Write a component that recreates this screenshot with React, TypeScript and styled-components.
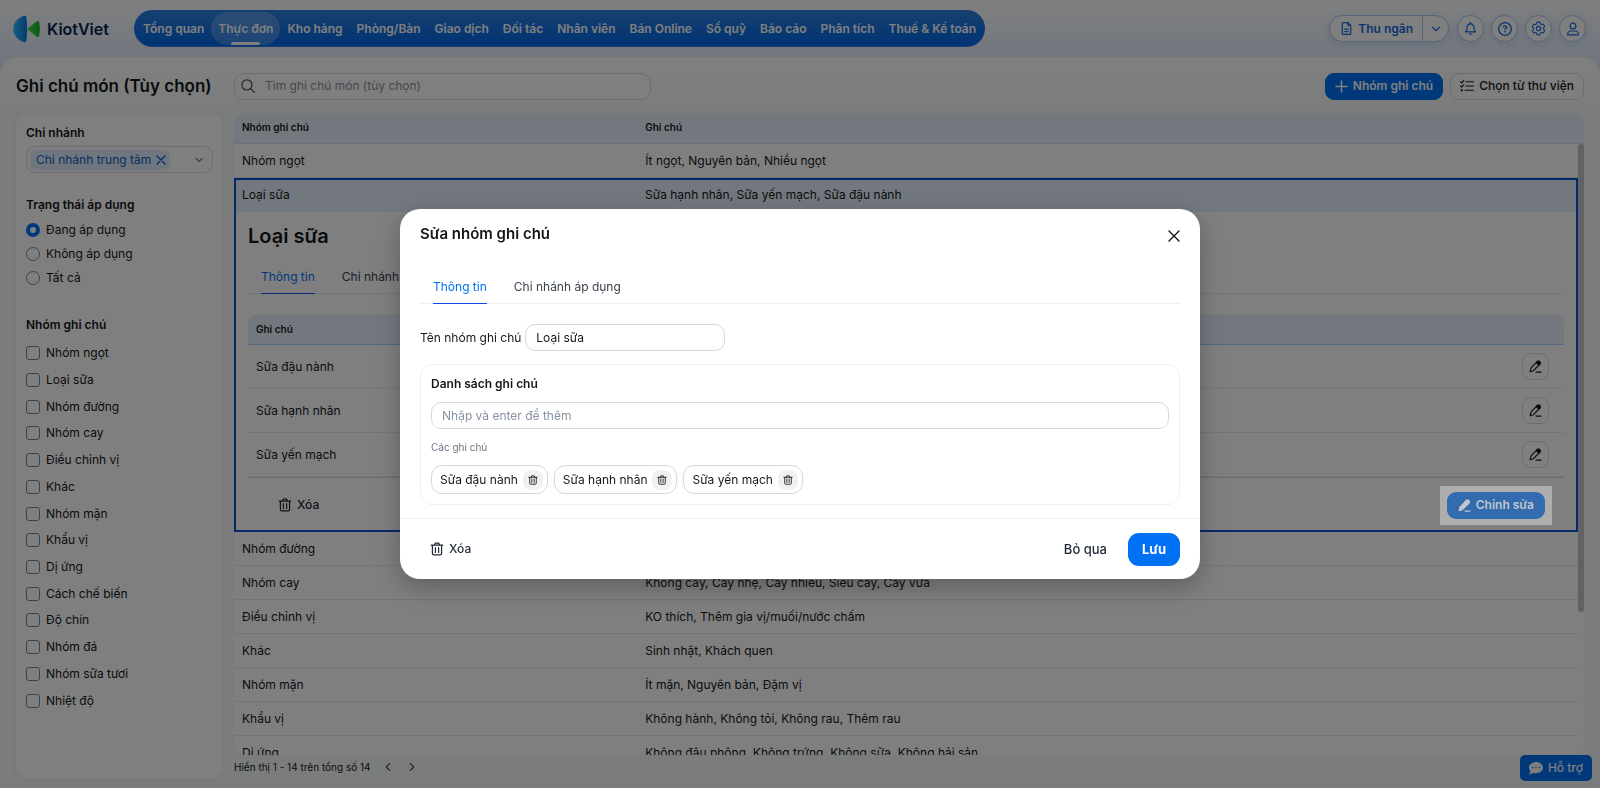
import React from "react";
import styled, { createGlobalStyle, css } from "styled-components";
import { ChevronDown, ChevronLeft, ChevronRight } from "lucide-react";
import { FaRegBell, FaRegCircleQuestion, FaRegFileLines } from "react-icons/fa6";
import { FaCommentDots } from "react-icons/fa";
import { HiOutlineCog6Tooth } from "react-icons/hi2";

const GlobalStyle = createGlobalStyle`
  *, *::before, *::after { box-sizing: border-box; }
  body {
    margin: 0;
    font-family: Inter, "Liberation Sans", sans-serif;
    font-size: 12px;
    line-height: 16px;
    color: #15171a;
  }
  button, input { font: inherit; color: inherit; }
  button { cursor: pointer; padding: 0; border: 0; background: none; }
  a { color: inherit; text-decoration: none; }
  h1, h2, h3 { margin: 0; }
`;

/* ---------- icons ---------- */

const CrossIcon = ({ size }: { size: number }) => (
  <svg width={size} height={size} viewBox={`0 0 ${size} ${size}`} fill="none" stroke="currentColor" strokeWidth="1.4" strokeLinecap="round" aria-hidden="true">
    <path d={`M1 1L${size - 1} ${size - 1}M${size - 1} 1L1 ${size - 1}`} />
  </svg>
);

const PlusIcon = () => (
  <svg width="13" height="13" viewBox="0 0 13 13" fill="none" stroke="currentColor" strokeWidth="1.5" strokeLinecap="round" aria-hidden="true">
    <path d="M6.5 1v11M1 6.5h11" />
  </svg>
);

const SearchIcon = () => (
  <svg width="14" height="14" viewBox="0 0 14 14" fill="none" stroke="currentColor" strokeWidth="1.2" strokeLinecap="round" aria-hidden="true">
    <circle cx="5.900" cy="5.900" r="5.100" />
    <path d="M9.700 9.700l3.700 3.700" />
  </svg>
);

const TrashIcon = ({ size = 14 }: { size?: number }) => (
  <svg width={size} height={size} viewBox="0 0 14 14" fill="none" stroke="currentColor" strokeWidth="1.2" strokeLinecap="round" strokeLinejoin="round" aria-hidden="true">
    <path d="M1.2 3.2h11.6M4.4 3l.8-1.8h3.6L9.6 3M2.4 3.4v8.2c0 .8.5 1.3 1.3 1.3h6.6c.8 0 1.3-.5 1.3-1.3V3.4M5.4 5.6v4.8M8.6 5.6v4.8" />
  </svg>
);

const PenIcon = ({ filled }: { filled?: boolean }) => (
  <svg width="13" height="13" viewBox="0 0 14 14" fill={filled ? "currentColor" : "none"} stroke="currentColor" strokeWidth="1.2" strokeLinecap="round" strokeLinejoin="round" aria-hidden="true">
    <path d="M1.200 12.600l.9-3.900L9 1.600c.7-.7 1.600-.7 2.300 0l.5.5c.6.7.6 1.500 0 2.200l-7 7.200z" />
    <path d="M7.800 2.900l2.700 2.700 1.300-1.300c.6-.7.600-1.500 0-2.200l-.5-.5c-.7-.7-1.600-.7-2.300 0z" fill="currentColor" />
    <path d="M7.500 13h5.500" fill="none" />
  </svg>
);

const UserIcon = () => (
  <svg width="14" height="14" viewBox="0 0 14 14" fill="none" stroke="currentColor" strokeWidth="1.2" strokeLinejoin="round" aria-hidden="true">
    <circle cx="7" cy="4" r="2.9" />
    <path d="M1.6 12.900c0-2.500 1.200-3.900 3.400-3.900h4c2.200 0 3.400 1.400 3.400 3.900z" />
  </svg>
);

const ListCheckIcon = () => (
  <svg width="14" height="14" viewBox="0 0 14 14" fill="none" stroke="currentColor" strokeWidth="1.1" strokeLinecap="round" strokeLinejoin="round" aria-hidden="true">
    <path d="M6 2.700h7.500M6 7h7.500M5 11.300h8.500M.6 2.700l1.100 1.100L3.900 1.400M.6 7l1.100 1.100L3.900 5.700" />
    <circle cx="1.8" cy="11.300" r=".6" fill="currentColor" />
  </svg>
);

const Logo = () => (
  <svg width="28" height="28" viewBox="0 0 28 28" aria-hidden="true">
    <defs>
      <linearGradient id="wing" x1="0" x2="1">
        <stop offset="0" stopColor="#2fc0ff" />
        <stop offset="1" stopColor="#0a78e0" />
      </linearGradient>
      <linearGradient id="leaf" x1="0" x2="1">
        <stop offset="0" stopColor="#4fdd4a" />
        <stop offset="1" stopColor="#10b62c" />
      </linearGradient>
    </defs>
    <path d="M11.500.8C4.600 2.600.300 8 .300 14s4.300 11.500 11.200 13.200c1 .200 1.600-.3 1.800-1.100 1.200-8.500 1.200-15.800 0-24.200C13.100 1.100 12.500.600 11.500.8z" fill="url(#wing)" />
    <path d="M15.500 12.700l8-6.300c1.300-.9 2.200-.6 2.600.7 1 4.700 1 9.100 0 13.800-.4 1.300-1.300 1.600-2.600.7l-8-6.300c-1.100-.9-1.100-1.700 0-2.600z" fill="url(#leaf)" />
  </svg>
);

/* ---------- page frame ---------- */

const Page = styled.div`
  display: flex;
  flex-direction: column;
  height: 100vh;
  background: linear-gradient(#ffffff 0, #e4edfc 57px, #e4edfc 100%);
`;

const Header = styled.header`
  display: flex;
  align-items: center;
  flex: none;
  height: 57px;
  padding: 0 14px 0 13px;
`;

const Brand = styled.a`
  display: flex;
  align-items: center;
  gap: 6px;
  width: 121px;
  font-size: 16px;
  font-weight: 600;
  color: #0a1f55;
`;

const Nav = styled.nav`
  display: flex;
  align-items: center;
  height: 37px;
  padding: 0 1px;
  border: 1px solid #2a7be8;
  border-radius: 18px;
  background: linear-gradient(#2b7fdf, #0067e8);
`;

const NavLink = styled.a<{ $active?: boolean }>`
  position: relative;
  display: flex;
  align-items: center;
  height: 33px;
  padding: 0 7px;
  border-radius: 17px;
  font-weight: 600;
  color: #ffffff;
  white-space: nowrap;
  ${(p) =>
    p.$active &&
    css`
      background: rgba(255, 255, 255, 0.22);
      &::after {
        content: "";
        position: absolute;
        left: 20px;
        right: 20px;
        bottom: 0;
        height: 3px;
        border-radius: 2px;
        background: #ffffff;
      }
    `}
`;

const Tools = styled.div`
  display: flex;
  gap: 7px;
  margin-left: auto;
  color: #136be4;
`;

const toolShape = css`
  height: 27px;
  border: 1px solid #a9c9f3;
  border-radius: 14px;
  background: #ffffff;
  box-shadow: 0 2px 8px rgba(0, 90, 200, 0.15);
`;

const Split = styled.div`
  ${toolShape}
  display: flex;
  font-weight: 600;
  margin-right: 1px;
`;

const SplitMain = styled.button`
  display: flex;
  align-items: center;
  gap: 5px;
  padding: 0 9px 0 10px;
  border-right: 1px solid #a9c9f3;
  color: #136be4;
`;

const SplitMore = styled.button`
  display: grid;
  place-items: center;
  width: 25px;
  color: #136be4;
`;

const RoundTool = styled.button`
  ${toolShape}
  display: grid;
  place-items: center;
  width: 27px;
  color: #136be4;
`;

const Main = styled.main`
  display: flex;
  flex-direction: column;
  flex: 1;
  min-height: 0;
  padding: 15px 16px 10px;
  border-radius: 20px 20px 0 0;
  background: linear-gradient(#ffffff, #f6faf8 56px);
`;

const TitleRow = styled.div`
  display: flex;
  align-items: center;
  flex: none;
  height: 28px;
  margin-bottom: 13px;
`;

const PageTitle = styled.h1`
  width: 218px;
  font-size: 17px;
  line-height: 24px;
  font-weight: 600;
  white-space: nowrap;
`;

const SearchBox = styled.label`
  display: flex;
  align-items: center;
  gap: 10px;
  width: 417px;
  height: 27px;
  padding: 0 6px;
  border: 1px solid #d8dade;
  border-radius: 10px;
  background: #ffffff;
  color: #4a4f57;
`;

const SearchInput = styled.input`
  flex: 1;
  min-width: 0;
  padding: 0;
  border: 0;
  outline: 0;
  background: none;
  &::placeholder { color: #8b929d; opacity: 1; }
`;

const Actions = styled.div`
  display: flex;
  gap: 7px;
  margin-left: auto;
`;

const ActionButton = styled.button<{ $primary?: boolean }>`
  display: flex;
  align-items: center;
  gap: 5px;
  height: 27px;
  padding: 0 9px;
  border: 1px solid ${(p) => (p.$primary ? "#0070f4" : "#d8dade")};
  border-radius: 9px;
  background: ${(p) => (p.$primary ? "#0070f4" : "#ffffff")};
  color: ${(p) => (p.$primary ? "#ffffff" : "#15171a")};
  font-weight: ${(p) => (p.$primary ? 600 : 500)};
  white-space: nowrap;
`;

const Columns = styled.div`
  display: flex;
  gap: 11px;
  flex: 1;
  min-height: 0;
`;

/* ---------- filters ---------- */

const Sidebar = styled.aside`
  flex: none;
  width: 207px;
  padding: 12px 10px 0;
  border-radius: 12px;
  background: #ffffff;
  box-shadow: 0 2px 10px rgba(0, 0, 0, 0.05);
`;

const FilterTitle = styled.h2`
  font-size: 12px;
  line-height: 16px;
  font-weight: 600;
`;

const BranchSelect = styled.div`
  display: flex;
  align-items: center;
  justify-content: space-between;
  height: 27px;
  margin: 5px 0 24px;
  padding: 0 7px 0 3px;
  border: 1px solid #d8dade;
  border-radius: 9px;
`;

const BranchChip = styled.span`
  display: flex;
  align-items: center;
  gap: 5px;
  height: 20px;
  padding: 0 4px 0 6px;
  border-radius: 7px;
  background: #dfecfd;
  color: #0f5dc4;
`;

const IconButton = styled.button`
  display: grid;
  place-items: center;
`;

const Options = styled.div<{ $height: number }>`
  display: grid;
  grid-auto-rows: 1fr;
  height: ${(p) => p.$height}px;
`;

const RadioOptions = styled(Options)`
  margin: 5px 0 27px;
`;

const CheckOptions = styled(Options)`
  margin-top: 7px;
`;

const Option = styled.label`
  display: flex;
  align-items: center;
  gap: 6px;
`;

const Tick = styled.input`
  appearance: none;
  width: 14px;
  height: 14px;
  margin: 0;
  border: 1px solid #7b8494;
  border-radius: ${(p) => (p.type === "radio" ? "50%" : "3px")};
  background: #ffffff;
  &:checked { border: 4px solid #0070f4; }
`;

/* ---------- notes table ---------- */

const Content = styled.section`
  position: relative;
  display: flex;
  flex-direction: column;
  flex: 1;
  min-width: 0;
`;

const NotesTable = styled.table`
  display: flex;
  flex-direction: column;
  flex: 1;
  min-height: 0;
  border-radius: 10px;
  overflow: hidden;
  background: #ffffff;
`;

const NotesHead = styled.thead`
  display: block;
  flex: none;
  height: 31px;
  padding-right: 6px;
  border-bottom: 1px solid #cfe2fb;
  background: #e6f0fe;
`;

const NotesBody = styled.tbody`
  display: block;
  flex: 1;
  min-height: 0;
  margin-right: 6px;
  overflow-y: auto;
  scrollbar-width: none;
`;

const NotesRow = styled.tr<{ $selected?: boolean }>`
  display: grid;
  grid-template-columns: 30% 1fr;
  align-items: center;
  height: 34px;
  border-bottom: 1px solid #e9eaec;
  ${(p) =>
    p.$selected &&
    css`
      padding-bottom: 2px;
      border: 2px solid #0a50d0;
      border-bottom: 0;
      background: #e6f0fe;
      td:first-child { padding-left: 6px; }
      td:last-child { padding-left: 7px; }
    `}
`;

const HeadRow = styled.tr`
  display: grid;
  grid-template-columns: 30% 1fr;
  align-items: center;
  height: 28px;
`;

const Th = styled.th`
  padding: 0 8px;
  font-size: 10px;
  font-weight: 600;
  text-align: left;
`;

const Td = styled.td`
  padding: 0 8px;
  white-space: nowrap;
`;

const DetailRow = styled.tr`
  display: block;
  border: 2px solid #0a50d0;
  border-top: 0;
`;

const DetailCell = styled.td`
  display: block;
  height: 318px;
  padding: 0 12px;
`;

const DetailTitle = styled.h2`
  font-size: 20px;
  line-height: 48px;
  font-weight: 600;
`;

const Tabs = styled.div`
  display: flex;
  gap: 27px;
  height: 34px;
  padding-left: 13px;
  border-bottom: 1px solid #e9eaec;
`;

const Tab = styled.button<{ $active?: boolean }>`
  height: 34px;
  border-bottom: 1px solid ${(p) => (p.$active ? "#0a50e8" : "transparent")};
  color: ${(p) => (p.$active ? "#0070f4" : "#3a424e")};
`;

const InnerTable = styled.table`
  width: 100%;
  margin-top: 20px;
  border-collapse: separate;
  border-spacing: 0;
  border-bottom: 1px solid #d4d6da;
`;

const InnerTh = styled(Th)`
  height: 31px;
  border-bottom: 1px solid #a5cdfb;
  background: #e6f0fe;
  &:first-child { border-top-left-radius: 10px; }
  &:last-child { border-top-right-radius: 10px; }
`;

const InnerTd = styled(Td)`
  height: 44px;
  border-bottom: 1px solid #e9eaec;
`;

const EditCell = styled(InnerTd)`
  width: 60px;
  padding-right: 15px;
`;

const SmallEdit = styled.button`
  display: grid;
  place-items: center;
  width: 27px;
  height: 27px;
  margin-left: auto;
  border: 1px solid #d8dade;
  border-radius: 9px;
`;

const DetailActions = styled.div`
  display: flex;
  align-items: center;
  justify-content: space-between;
  height: 52px;
  padding: 2px 12px 0 30px;
`;

const PlainButton = styled.button`
  display: flex;
  align-items: center;
  gap: 5px;
  font-weight: 500;
  color: #1f2937;
`;

const Spotlight = styled.div`
  position: relative;
  z-index: 6;
  padding: 6px 7px;
  background: #aeaeae;
`;

const EditButton = styled.button`
  display: flex;
  align-items: center;
  gap: 5px;
  height: 27px;
  padding: 0 11px;
  border-radius: 9px;
  background: #326bae;
  color: #c2c6cc;
  font-weight: 600;
`;

const ScrollThumb = styled.div`
  position: absolute;
  top: 31px;
  right: 0;
  width: 6px;
  height: 468px;
  border-radius: 3px;
  background: #c0c2ca;
`;

const Pager = styled.footer`
  display: flex;
  align-items: center;
  flex: none;
  height: 23px;
  gap: 10px;
  font-size: 10px;
`;

const Support = styled.button`
  position: fixed;
  right: 8px;
  bottom: 7px;
  display: flex;
  align-items: center;
  gap: 5px;
  height: 26px;
  padding: 0 9px;
  border-radius: 5px;
  background: #0070f4;
  color: #ffffff;
  font-weight: 500;
`;

/* ---------- dialog ---------- */

const Shade = styled.div`
  position: fixed;
  inset: 0;
  z-index: 5;
  background: rgba(0, 0, 0, 0.5);
`;

const DialogLayer = styled.div`
  position: fixed;
  inset: 0;
  z-index: 7;
  display: grid;
  place-items: center;
`;

const Dialog = styled.div`
  width: 800px;
  border-radius: 20px;
  background: #ffffff;
  box-shadow: 0 8px 24px rgba(0, 0, 0, 0.25);
`;

const DialogHead = styled.div`
  display: flex;
  align-items: center;
  justify-content: space-between;
  height: 50px;
  padding: 0 20px;
  color: #15171a;
`;

const CloseButton = styled(IconButton)`
  padding-top: 4px;
`;

const DialogTitle = styled.h2`
  font-size: 15px;
  line-height: 20px;
  font-weight: 600;
`;

const DialogBody = styled.div`
  padding: 11px 20px 13px;
`;

const DialogTabs = styled(Tabs)`
  border-bottom: 1px solid #eeeff0;
`;

const NameRow = styled.div`
  display: flex;
  align-items: center;
  gap: 4px;
  margin: 20px 0 13px;
`;

const TextBox = styled.input`
  width: 100%;
  height: 27px;
  padding: 0 10px;
  border: 1px solid #d5d8dd;
  border-radius: 10px;
  background: #ffffff;
  outline: 0;
  &::placeholder { color: #8792a2; opacity: 1; }
`;

const NameInput = styled(TextBox)`
  width: 200px;
`;

const NotesBox = styled.div`
  padding: 11px 10px 10px;
  border: 1px solid #eeeff0;
  border-radius: 12px;
`;

const NotesLabel = styled.label`
  display: block;
  margin-bottom: 10px;
  font-weight: 600;
`;

const Caption = styled.div`
  margin: 10px 0;
  font-size: 10px;
  color: #6b7280;
`;

const Chips = styled.div`
  display: flex;
  gap: 6px;
`;

const Chip = styled.span`
  display: flex;
  align-items: center;
  gap: 5px;
  height: 29px;
  padding: 0 4px 0 8px;
  border: 1px solid #d5d8dd;
  border-radius: 11px;
`;

const ChipRemove = styled.button`
  display: grid;
  place-items: center;
  width: 20px;
  height: 20px;
  border-radius: 8px;
  background: #f0f1f2;
`;

const DialogFoot = styled.div`
  display: flex;
  align-items: center;
  height: 61px;
  padding: 0 20px 0 30px;
  border-top: 1px solid #eeeff0;
`;

const Cancel = styled.button`
  margin-left: auto;
  margin-right: 21px;
  font-size: 13px;
  font-weight: 500;
  color: #1f2937;
`;

const Save = styled.button`
  height: 33px;
  padding: 0 14px;
  border-radius: 11px;
  background: #0070f4;
  color: #ffffff;
  font-size: 13px;
  font-weight: 700;
`;

/* ---------- data ---------- */

const navItems = ["Tổng quan", "Thực đơn", "Kho hàng", "Phòng/Bàn", "Giao dịch", "Đối tác", "Nhân viên", "Bán Online", "Sổ quỹ", "Báo cáo", "Phân tích", "Thuế & Kế toán"];

const statuses = ["Đang áp dụng", "Không áp dụng", "Tất cả"];

const groups = ["Nhóm ngọt", "Loại sữa", "Nhóm đường", "Nhóm cay", "Điều chỉnh vị", "Khác", "Nhóm mặn", "Khẩu vị", "Dị ứng", "Cách chế biến", "Độ chín", "Nhóm đá", "Nhóm sữa tươi", "Nhiệt độ"];

const rows = [
  { name: "Nhóm ngọt", notes: "Ít ngọt, Nguyên bản, Nhiều ngọt" },
  { name: "Loại sữa", notes: "Sữa hạnh nhân, Sữa yến mạch, Sữa đậu nành", open: true },
  { name: "Nhóm đường", notes: "" },
  { name: "Nhóm cay", notes: "Không cay, Cay nhẹ, Cay nhiều, Siêu cay, Cay vừa" },
  { name: "Điều chỉnh vị", notes: "KO thích, Thêm gia vị/muối/nước chấm" },
  { name: "Khác", notes: "Sinh nhật, Khách quen" },
  { name: "Nhóm mặn", notes: "Ít mặn, Nguyên bản, Đậm vị" },
  { name: "Khẩu vị", notes: "Không hành, Không tỏi, Không rau, Thêm rau" },
  { name: "Dị ứng", notes: "Không đậu phộng, Không trứng, Không sữa, Không hải sản" },
];

const milkNotes = ["Sữa đậu nành", "Sữa hạnh nhân", "Sữa yến mạch"];

const Detail = () => (
  <DetailRow>
    <DetailCell colSpan={2}>
      <DetailTitle>Loại sữa</DetailTitle>
      <Tabs>
        <Tab $active>Thông tin</Tab>
        <Tab>Chi nhánh áp dụng</Tab>
      </Tabs>
      <InnerTable>
        <thead>
          <tr>
            <InnerTh>Ghi chú</InnerTh>
            <InnerTh aria-label="Sửa" />
          </tr>
        </thead>
        <tbody>
          {milkNotes.map((note) => (
            <tr key={note}>
              <InnerTd>{note}</InnerTd>
              <EditCell>
                <SmallEdit aria-label={`Sửa ${note}`}><PenIcon /></SmallEdit>
              </EditCell>
            </tr>
          ))}
        </tbody>
      </InnerTable>
      <DetailActions>
        <PlainButton><TrashIcon />Xóa</PlainButton>
        <Spotlight>
          <EditButton><PenIcon filled />Chỉnh sửa</EditButton>
        </Spotlight>
      </DetailActions>
    </DetailCell>
  </DetailRow>
);

const EditDialog = () => (
  <DialogLayer>
    <Dialog role="dialog" aria-modal="true" aria-labelledby="dialog-title">
      <DialogHead>
        <DialogTitle id="dialog-title">Sửa nhóm ghi chú</DialogTitle>
        <CloseButton aria-label="Đóng"><CrossIcon size={12} /></CloseButton>
      </DialogHead>
      <DialogBody>
        <DialogTabs>
          <Tab $active>Thông tin</Tab>
          <Tab>Chi nhánh áp dụng</Tab>
        </DialogTabs>
        <NameRow>
          <label htmlFor="group-name">Tên nhóm ghi chú</label>
          <NameInput id="group-name" defaultValue="Loại sữa" />
        </NameRow>
        <NotesBox>
          <NotesLabel htmlFor="new-note">Danh sách ghi chú</NotesLabel>
          <TextBox id="new-note" placeholder="Nhập và enter để thêm" />
          <Caption>Các ghi chú</Caption>
          <Chips>
            {milkNotes.map((note) => (
              <Chip key={note}>
                {note}
                <ChipRemove aria-label={`Xóa ${note}`}><TrashIcon size={10} /></ChipRemove>
              </Chip>
            ))}
          </Chips>
        </NotesBox>
      </DialogBody>
      <DialogFoot>
        <PlainButton><TrashIcon />Xóa</PlainButton>
        <Cancel>Bỏ qua</Cancel>
        <Save>Lưu</Save>
      </DialogFoot>
    </Dialog>
  </DialogLayer>
);

export default function App() {
  return (
    <>
      <GlobalStyle />
      <Page>
        <Header>
          <Brand href="#"><Logo />KiotViet</Brand>
          <Nav>
            {navItems.map((item) => (
              <NavLink key={item} href="#" $active={item === "Thực đơn"}>{item}</NavLink>
            ))}
          </Nav>
          <Tools>
            <Split>
              <SplitMain><FaRegFileLines size={13} />Thu ngân</SplitMain>
              <SplitMore aria-label="Thêm"><ChevronDown size={14} /></SplitMore>
            </Split>
            <RoundTool aria-label="Thông báo"><FaRegBell size={13} /></RoundTool>
            <RoundTool aria-label="Trợ giúp"><FaRegCircleQuestion size={14} /></RoundTool>
            <RoundTool aria-label="Thiết lập"><HiOutlineCog6Tooth size={17} /></RoundTool>
            <RoundTool aria-label="Tài khoản"><UserIcon /></RoundTool>
          </Tools>
        </Header>
        <Main>
          <TitleRow>
            <PageTitle>Ghi chú món (Tùy chọn)</PageTitle>
            <SearchBox>
              <SearchIcon />
              <SearchInput placeholder="Tìm ghi chú món (tùy chọn)" aria-label="Tìm ghi chú món" />
            </SearchBox>
            <Actions>
              <ActionButton $primary><PlusIcon />Nhóm ghi chú</ActionButton>
              <ActionButton><ListCheckIcon />Chọn từ thư viện</ActionButton>
            </Actions>
          </TitleRow>
          <Columns>
            <Sidebar>
              <FilterTitle>Chi nhánh</FilterTitle>
              <BranchSelect>
                <BranchChip>
                  Chi nhánh trung tâm
                  <IconButton aria-label="Bỏ chi nhánh"><CrossIcon size={10} /></IconButton>
                </BranchChip>
                <IconButton aria-label="Chọn chi nhánh"><ChevronDown size={12} /></IconButton>
              </BranchSelect>
              <FilterTitle>Trạng thái áp dụng</FilterTitle>
              <RadioOptions $height={72}>
                {statuses.map((status, i) => (
                  <Option key={status}>
                    <Tick type="radio" name="status" defaultChecked={i === 0} />
                    {status}
                  </Option>
                ))}
              </RadioOptions>
              <FilterTitle>Nhóm ghi chú</FilterTitle>
              <CheckOptions $height={374}>
                {groups.map((group) => (
                  <Option key={group}>
                    <Tick type="checkbox" />
                    {group}
                  </Option>
                ))}
              </CheckOptions>
            </Sidebar>
            <Content>
              <NotesTable>
                <NotesHead>
                  <HeadRow>
                    <Th>Nhóm ghi chú</Th>
                    <Th>Ghi chú</Th>
                  </HeadRow>
                </NotesHead>
                <NotesBody>
                  {rows.map((row) => (
                    <React.Fragment key={row.name}>
                      <NotesRow $selected={row.open}>
                        <Td>{row.name}</Td>
                        <Td>{row.notes}</Td>
                      </NotesRow>
                      {row.open && <Detail />}
                    </React.Fragment>
                  ))}
                </NotesBody>
              </NotesTable>
              <ScrollThumb />
              <Pager>
                Hiển thị 1 - 14 trên tổng số 14
                <IconButton aria-label="Trang trước"><ChevronLeft size={14} color="#555" /></IconButton>
                <IconButton aria-label="Trang sau"><ChevronRight size={14} color="#555" /></IconButton>
              </Pager>
            </Content>
          </Columns>
        </Main>
        <Support><FaCommentDots size={14} />Hỗ trợ</Support>
      </Page>
      <Shade />
      <EditDialog />
    </>
  );
}
